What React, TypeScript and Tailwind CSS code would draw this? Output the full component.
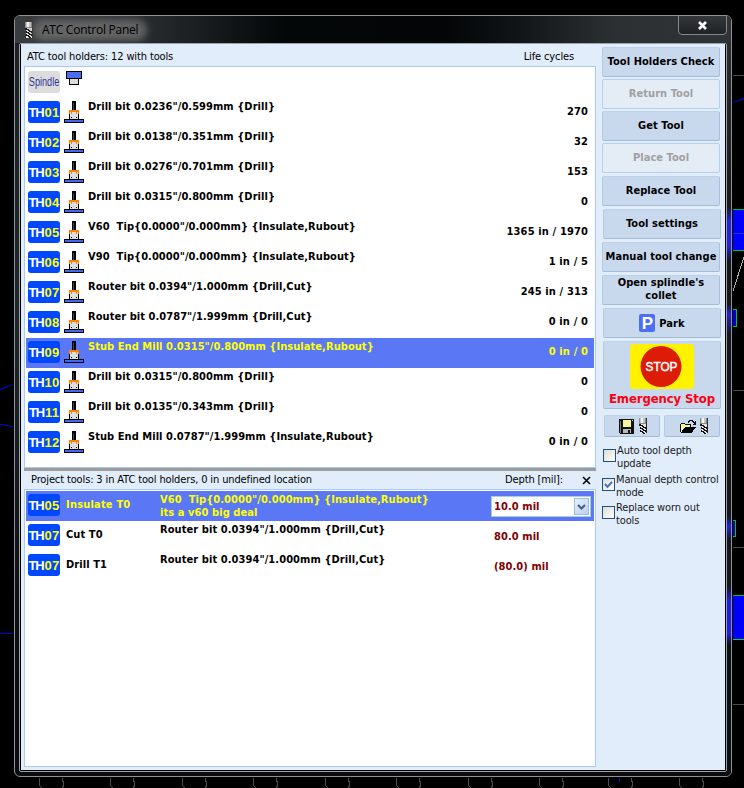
import React from "react";

const B = "font-bold tracking-[0.06px]";

function Badge({ n, className = "" }: { n: string; className?: string }) {
  return (
    <span
      className={`flex h-[22px] w-8 shrink-0 items-center justify-center gap-px rounded-[3px] bg-[#0048ff] font-['Liberation_Sans'] text-[13px] leading-none font-bold text-white ${className}`}
    >
      <span className="w-[15px] tracking-[-1.2px]">TH</span>
      <span className="tracking-[0.2px] text-[#ffff00]">{n}</span>
    </span>
  );
}

function ToolIcon() {
  return (
    <svg className="h-[22px] w-5 shrink-0" viewBox="0 0 20 22" shapeRendering="crispEdges">
      <rect x="8" y="0" width="4" height="10" fill="#000" />
      <rect x="9" y="2" width="1" height="7" fill="#444" />
      <rect x="5" y="11" width="10" height="7" fill="#000" />
      <rect x="6" y="11" width="8" height="7" fill="#dedede" />
      <rect x="5" y="9" width="10" height="2" fill="#ff8000" />
      <rect x="7" y="11" width="1" height="2" fill="#ff8000" />
      <rect x="12" y="11" width="1" height="2" fill="#ff8000" />
      <rect x="5" y="11" width="1" height="2" fill="#ff8000" />
      <rect x="14" y="11" width="1" height="2" fill="#ff8000" />
      <rect x="7" y="16" width="1" height="1" fill="#000" />
      <rect x="12" y="16" width="1" height="1" fill="#000" />
      <rect x="0" y="18" width="20" height="4" fill="#000" />
      <rect x="1" y="19" width="18" height="2" fill="#4169f0" />
    </svg>
  );
}

function MillIcon({ className = "" }: { className?: string }) {
  return (
    <svg className={`h-4 w-[8px] shrink-0 ${className}`} viewBox="0 0 8 16" shapeRendering="crispEdges">
      <rect x="0" y="0" width="8" height="6" fill="#8a8a8a" />
      <rect x="1" y="0" width="5" height="5" fill="#c4c4c4" />
      <rect x="2" y="0" width="2" height="5" fill="#f4f4f4" />
      <rect x="7" y="0" width="1" height="6" fill="#333" />
      <rect x="1" y="6" width="6" height="10" fill="#e4e4e4" />
      <path d="M1 6.500l6 4M1 9.500l6 4M1 12.500l5 3.500" stroke="#111" strokeWidth="1.300" />
      <path d="M7.500 6v9M.5 6v2" stroke="#222" />
    </svg>
  );
}

const holders: [string, string, string][] = [
  ["01", 'Drill bit 0.0236"/0.599mm {Drill}', "270"],
  ["02", 'Drill bit 0.0138"/0.351mm {Drill}', "32"],
  ["03", 'Drill bit 0.0276"/0.701mm {Drill}', "153"],
  ["04", 'Drill bit 0.0315"/0.800mm {Drill}', "0"],
  ["05", 'V60  Tip{0.0000"/0.000mm} {Insulate,Rubout}', "1365 in / 1970"],
  ["06", 'V90  Tip{0.0000"/0.000mm} {Insulate,Rubout}', "1 in / 5"],
  ["07", 'Router bit 0.0394"/1.000mm {Drill,Cut}', "245 in / 313"],
  ["08", 'Router bit 0.0787"/1.999mm {Drill,Cut}', "0 in / 0"],
  ["09", 'Stub End Mill 0.0315"/0.800mm {Insulate,Rubout}', "0 in / 0"],
  ["10", 'Drill bit 0.0315"/0.800mm {Drill}', "0"],
  ["11", 'Drill bit 0.0135"/0.343mm {Drill}', "0"],
  ["12", 'Stub End Mill 0.0787"/1.999mm {Insulate,Rubout}', "0 in / 0"],
];

function Btn({
  children,
  className = "",
  size = "h-[30px] w-[118px] pb-[2px]",
  disabled = false,
}: {
  children: React.ReactNode;
  className?: string;
  size?: string;
  disabled?: boolean;
}) {
  return (
    <button
      disabled={disabled}
      className={`flex shrink-0 items-center justify-center rounded-[2px] border text-center leading-[13px] whitespace-nowrap ${B} ${size} ${
        disabled
          ? "border-[#b4d0ec] bg-[#e4ecf5] text-[#a0a0a0]"
          : "border-t-[#bdd2e8] border-r-[#a9c1dc] border-b-[#a3bcd8] border-l-[#b4cbe4] bg-[#c8d8ed] text-black"
      } ${className}`}
    >
      {children}
    </button>
  );
}

function Check({ on = false, lines, className = "" }: { on?: boolean; lines: [string, string]; className?: string }) {
  return (
    <div className={`flex gap-px ${className}`}>
      <span className="mt-[5px] flex size-[13px] shrink-0 items-center justify-center border border-[#1c5180] bg-gradient-to-br from-[#dcdcd8] to-white">
        {on && (
          <svg width="9" height="9" viewBox="0 0 9 9">
            <path d="M1 4l2.500 2.800L8 1.800" fill="none" stroke="#3c74b8" strokeWidth="2" />
          </svg>
        )}
      </span>
      <span className="leading-[13px] tracking-[-0.14px] whitespace-nowrap text-[#1a1a1a]">
        {lines[0]}
        <br />
        {lines[1]}
      </span>
    </div>
  );
}

function Backdrop() {
  return (
    <svg className="absolute inset-0" width="744" height="788" shapeRendering="crispEdges">
      <g fill="none" stroke="#4c4c4c">
        <path d="M733 75.500h11M733 390.500h11M733 547.500h11M733 704.500h11" />
        {[39, 110, 182, 253, 325, 396, 468, 539, 608, 679].map((x) => (
          <path key={x} d={`M${x + 0.5} 778v7l2 3M${x + 23.5} 778v3l1 1v3l-1 3`} />
        ))}
      </g>
      <g fill="none" stroke="#0000e0">
        <path d="M733 102.500l11 -4M0 389.500l13 -5M0 424l13 3M0 633.500h13M619.500 778v4" />
      </g>
      <path d="M744 257L733 291" stroke="#b0b0b0" fill="none" />
      <rect x="733" y="209" width="11" height="42" fill="#0000fa" />
      <path d="M733 233.500h11" stroke="#3030c0" />
      <path d="M733 209.500h11M733 250.500h11M733 595.500h11" stroke="#00c030" fill="none" />
      <path d="M733 309.500h3.500v17h-3.500" fill="#0000d0" stroke="#00c820" />
      <path d="M733 520.500h2.500v16h-2.500" fill="#0000d0" stroke="#00c820" />
      <rect x="733" y="596" width="11" height="43" fill="#0000fa" />
      <path d="M733 639.500h11" stroke="#00e020" />
    </svg>
  );
}

export default function App() {
  return (
    <div className="relative h-[788px] w-[744px] overflow-hidden bg-black font-['DejaVu_Sans_Condensed','DejaVu_Sans',sans-serif] text-[11px] text-black">
      <Backdrop />
      <div className="absolute top-[15px] left-[14px] flex h-[762px] w-[718px] flex-col overflow-hidden rounded-[6px] border border-[#8c9296] bg-[linear-gradient(180deg,#1c2022_0%,#20262a_40%,#0c0f12_80%,#0a0c10_100%)]">
        <div className="absolute top-0 right-0 h-full w-[5px] bg-[linear-gradient(180deg,#2c2e30_0px,#181a1c_190px,#2222e0_205px,#2222e0_230px,#15171a_245px,#15171a_288px,#2222d8_298px,#15171a_318px,#15171a_500px,#2222d8_510px,#15171a_525px,#15171a_570px,#2020e0_585px,#2020e0_618px,#0b1013_628px)]" />
        <header className="relative flex h-[27px] shrink-0 items-center bg-[linear-gradient(90deg,#3a3e40_0px,#282c2e_130px,#040708_270px,#030506_430px,#101416_500px,#2c3032_600px,#303335_718px)]">
          <MillIcon className="ml-[10px]" />
          <span className="ml-[5px] rounded-full bg-[#6e6e6e]/80 px-[4px] font-['Open_Sans'] text-[12px] leading-[12px] tracking-[-0.25px] whitespace-nowrap shadow-[0_0_7px_5px_rgba(110,110,110,0.8)]">
            ATC Control Panel
          </span>
          <span className="absolute -top-px right-[4px] flex h-[20px] w-[49px] items-center justify-center rounded-b-[4px] border border-[#85898b] bg-[linear-gradient(180deg,#33373a,#202326)]">
            <svg width="11" height="9" viewBox="0 0 11 9">
              <path d="M2 1l7 7M9 1L2 8" stroke="#fff" strokeWidth="2.600" />
            </svg>
          </span>
        </header>
        <div className="relative mr-[4px] ml-[4px] flex h-[729px] shrink-0 rounded-[2px] border border-[#9da3a6] bg-black px-px pb-px">
          <div className="flex h-[726px] w-full bg-[#e1edfb]">
            <main className="ml-[3px] flex w-[572px] shrink-0 flex-col">
              <div className="flex h-[22px] shrink-0 items-center justify-between pt-[4px] pr-[22px] pl-[3px] tracking-[-0.13px]">
                <span>ATC tool holders: 12 with tools</span>
                <span>Life cycles</span>
              </div>
              <section className="flex h-[402px] shrink-0 flex-col border border-[#a8ccec] bg-white p-px">
                <div className="flex h-[30px] shrink-0 pl-[2px]">
                  <span className="mt-[3px] flex h-[22px] w-8 items-center justify-center rounded-[3px] bg-[#dcdcdc] font-['Liberation_Sans'] text-[12px] text-[#33339a]">
                    <span className="scale-x-[0.760]">Spindle</span>
                  </span>
                  <svg className="mt-[3px] ml-[6px]" width="16" height="14" shapeRendering="crispEdges">
                    <rect x="0" y="0" width="16" height="8" fill="#000" />
                    <rect x="1" y="1" width="14" height="6" fill="#4b6ef5" />
                    <rect x="3" y="8" width="10" height="6" fill="#000" />
                    <rect x="4" y="8" width="8" height="5" fill="#dcdcdc" />
                  </svg>
                </div>
                {holders.map(([n, name, life]) => (
                  <div
                    key={n}
                    className={`flex h-[30px] shrink-0 pr-[6px] pl-[2px] leading-[13px] ${B} ${
                      n === "09" ? "bg-[#5a78f5] text-[#ffff00]" : ""
                    }`}
                  >
                    <Badge n={n} className="mt-[3px]" />
                    <span className="mt-[3px] ml-[4px] flex">
                      <ToolIcon />
                    </span>
                    <span className="mt-[2px] ml-[4px] flex-1 whitespace-pre">{name}</span>
                    <span className="mt-[7px] tracking-[0.14px] whitespace-pre">{life}</span>
                  </div>
                ))}
              </section>
              <div className="h-[3px] shrink-0 bg-[#9d9d9d]" />
              <div className="flex h-[18px] shrink-0 items-center pr-[5px] pl-[7px] tracking-[-0.13px]">
                <span className="flex-1">Project tools: 3 in ATC tool holders, 0 in undefined location</span>
                <span className="mr-[19px]">Depth [mil]:</span>
                <svg width="9" height="9" viewBox="0 0 9 9">
                  <path d="M1 1l7 7M8 1L1 8" stroke="#000" strokeWidth="1.600" />
                </svg>
              </div>
              <section className="flex h-[278px] shrink-0 flex-col border border-[#a8ccec] bg-white p-px font-bold tracking-[0.08px]">
                <div className="flex h-[30px] shrink-0 bg-[#5a78f5] pl-[2px] leading-[13px] text-[#ffff00]">
                  <Badge n="05" className="mt-[3px]" />
                  <span className="mt-[7px] ml-[6px] w-[94px] tracking-[0.2px]">Insulate T0</span>
                  <span className="mt-[2px] w-[331px] whitespace-pre">
                    {'V60  Tip{0.0000"/0.000mm} {Insulate,Rubout}'}
                    <br />
                    its a v60 big deal
                  </span>
                  <div className="mt-[5px] flex h-[21px] w-[100px] items-center justify-between border border-[#a8ccec] bg-white pr-px pl-[2px] text-[#800000]">
                    <span>10.0 mil</span>
                    <span className="flex h-[17px] w-[15px] items-center justify-center border border-[#9cc0e4] bg-[linear-gradient(135deg,#e8f2fd,#b8d0ec)]">
                      <svg width="9" height="6" viewBox="0 0 9 6">
                        <path d="M1 1l3.500 3.500L8 1" fill="none" stroke="#445c80" strokeWidth="2" />
                      </svg>
                    </span>
                  </div>
                </div>
                {[
                  ["Cut T0", "80.0 mil"],
                  ["Drill T1", "(80.0) mil"],
                ].map(([t, d]) => (
                  <div key={t} className="flex h-[30px] shrink-0 pl-[2px] leading-[13px]">
                    <Badge n="07" className="mt-[3px]" />
                    <span className="mt-[7px] ml-[6px] w-[94px]">{t}</span>
                    <span className="mt-[2px] w-[334px] whitespace-pre">{'Router bit 0.0394"/1.000mm {Drill,Cut}'}</span>
                    <span className="mt-[9px] text-[#800000]">{d}</span>
                  </div>
                ))}
              </section>
            </main>
            <aside className="ml-[6px] flex flex-col">
              <div className="mt-[3px] flex flex-col gap-[2px]">
                <Btn>Tool Holders Check</Btn>
                <Btn disabled>Return Tool</Btn>
                <Btn>Get Tool</Btn>
                <Btn disabled>Place Tool</Btn>
              </div>
              <div className="mt-[3px] flex flex-col gap-[3px]">
                <Btn>Replace Tool</Btn>
                <Btn className="ml-px">Tool settings</Btn>
                <Btn>Manual tool change</Btn>
                <Btn>
                  Open splindle's
                  <br />
                  collet
                </Btn>
                <Btn size="h-[30px] w-[118px]" className="ml-px gap-[4px]">
                  <span className="flex h-[18px] w-[16px] items-center justify-center rounded-[2px] bg-[#4b6ef5] font-['Liberation_Sans'] text-[17px] text-white">
                    P
                  </span>
                  <span className="pt-px">Park</span>
                </Btn>
                <Btn size="h-[68px] w-[118px]" className="ml-px flex-col">
                  <svg width="64" height="45">
                    <rect width="64" height="45" rx="4" fill="#fff200" />
                    <circle cx="31" cy="22.500" r="20.500" fill="#dd1c08" />
                    <text
                      x="31.500"
                      y="27"
                      textAnchor="middle"
                      fill="#fff"
                      stroke="#fff"
                      strokeWidth="0.500"
                      fontFamily="Liberation Sans"
                      fontSize="13"
                      fontWeight="400"
                      textLength="32"
                      lengthAdjust="spacingAndGlyphs"
                    >
                      STOP
                    </text>
                  </svg>
                  <span className="mt-[2px] text-[13px] leading-[15px] tracking-[-0.1px] text-[#fb0012]">Emergency Stop</span>
                </Btn>
              </div>
              <div className="mt-[6px] ml-[2px] flex gap-[4px]">
                <Btn size="h-[22px] w-[56px]" className="gap-[5px] pl-px">
                  <svg width="15" height="15" shapeRendering="crispEdges">
                    <path d="M0 0h15v15H1l-1-1z" fill="#111" />
                    <rect x="4" y="1" width="8" height="7" fill="#f8f6a0" />
                    <rect x="4" y="10" width="8" height="4" fill="#b8b8b8" />
                    <rect x="9" y="11" width="2" height="3" fill="#111" />
                    <rect x="1" y="2" width="1" height="12" fill="#777" />
                    <rect x="13" y="1" width="1" height="1" fill="#eee" />
                  </svg>
                  <MillIcon />
                </Btn>
                <Btn size="h-[22px] w-[56px]" className="gap-[4px] pl-[3px]">
                  <svg width="16" height="13" shapeRendering="crispEdges">
                    <path d="M.5 12V4.500l1-1h3l1 1h5V7" fill="#f6f49a" stroke="#111" />
                    <path d="M1 12.500L5 7h11l-4 5.500z" fill="#000" />
                    <path d="M8 2.500l2-2h2l3 3M15.500 1v3h-3" fill="none" stroke="#111" />
                  </svg>
                  <MillIcon />
                </Btn>
              </div>
              <Check className="mt-[7px] ml-px" lines={["Auto tool depth", "update"]} />
              <Check className="mt-[3px]" on lines={["Manual depth control", "mode"]} />
              <Check className="mt-[2px]" lines={["Replace worn out", "tools"]} />
            </aside>
          </div>
        </div>
      </div>
    </div>
  );
}
